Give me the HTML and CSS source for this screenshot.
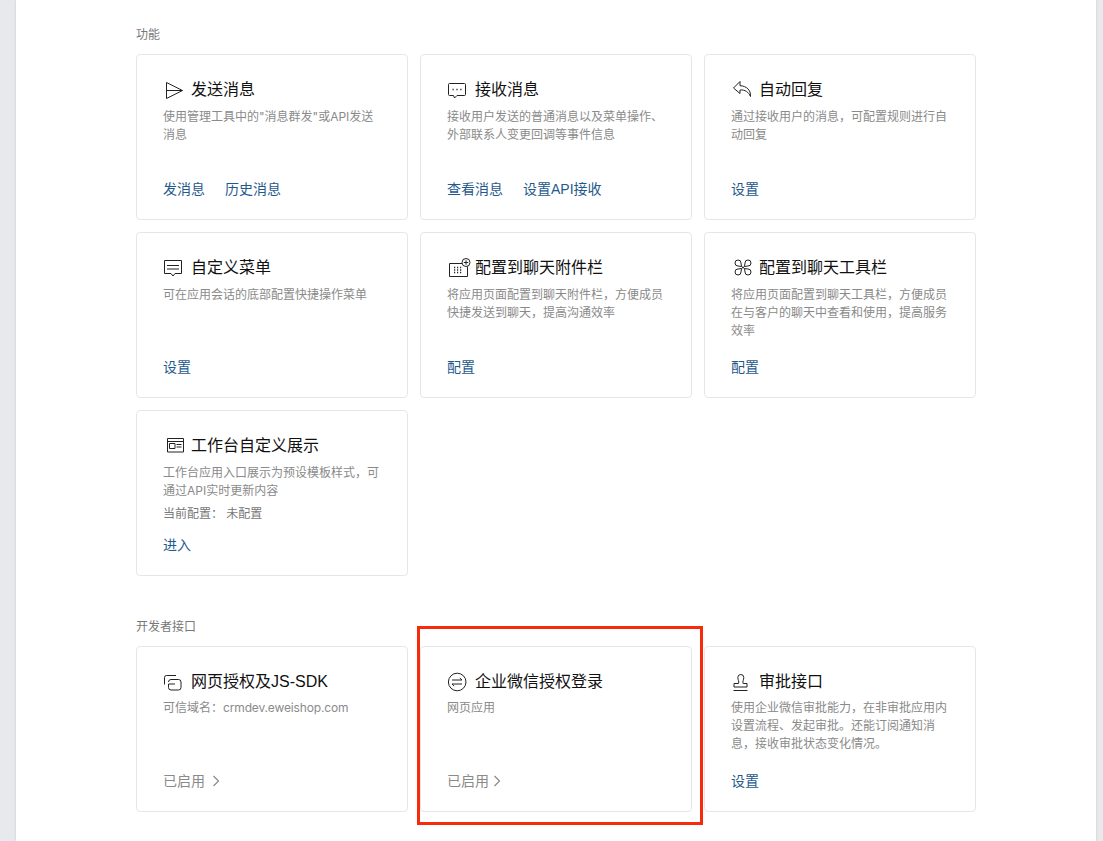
FILE: index.html
```html
<!DOCTYPE html>
<html lang="zh-CN">
<head>
<meta charset="utf-8">
<title>应用详情</title>
<link rel="stylesheet" href="styles.css">
</head>
<body>
<main class="panel">
  <section class="section">
    <h2 class="section-title">功能</h2>
    <div class="grid">
      <article class="card">
        <h3 class="card-title"><svg class="icon" viewBox="0 0 20 20"><path d="M3.500 2.500 19.500 10.500 3.500 18.500ZM3.500 10.500H19.500"/></svg>发送消息</h3>
        <p class="desc">使用管理工具中的"消息群发"或API发送消息</p>
        <div class="actions"><a class="link">发消息</a><a class="link">历史消息</a></div>
      </article>
      <article class="card">
        <h3 class="card-title"><svg class="icon" viewBox="0 0 20 20"><path d="M2.500 3.500H17.500A1 1 0 0 1 18.500 4.500V14.500A1 1 0 0 1 17.500 15.500H10L7.500 18 6.500 15.500H2.500A1 1 0 0 1 1.500 14.500V4.500A1 1 0 0 1 2.500 3.500Z"/><path class="dots" d="M5.500 9.500H6.700M9.400 9.500H10.600M13.300 9.500H14.500"/></svg>接收消息</h3>
        <p class="desc">接收用户发送的普通消息以及菜单操作、外部联系人变更回调等事件信息</p>
        <div class="actions"><a class="link">查看消息</a><a class="link">设置API接收</a></div>
      </article>
      <article class="card">
        <h3 class="card-title"><svg class="icon" viewBox="0 0 20 20"><path d="M9 1.500 2.500 8 9 13.500V10C14 9.500 17.500 12 19.500 16.500 20 10 15.500 6 9 5.700Z"/></svg>自动回复</h3>
        <p class="desc">通过接收用户的消息，可配置规则进行自动回复</p>
        <div class="actions"><a class="link">设置</a></div>
      </article>
      <article class="card">
        <h3 class="card-title"><svg class="icon" viewBox="0 0 20 20"><path d="M1.500 2.500H18.500V15.500H12L10 18 8 15.500H1.500ZM4 7.500H16M4 11H16"/></svg>自定义菜单</h3>
        <p class="desc">可在应用会话的底部配置快捷操作菜单</p>
        <div class="actions"><a class="link">设置</a></div>
      </article>
      <article class="card">
        <h3 class="card-title"><svg class="icon icon-wide" viewBox="0 0 24 20"><path d="M15 5.500H2.500V18.500H20.500V8.500"/><path class="dots" d="M7 9.500H8.200M10 9.500H11.200M13 9.500H14.200M7 12H8.200M10 12H11.200M13 12H14.200M7 14.500H8.200M10 14.500H11.200M13 14.500H14.200"/><circle cx="19" cy="4.500" r="4"/><path d="M19 2.300V6.700M16.800 4.500H21.200"/></svg>配置到聊天附件栏</h3>
        <p class="desc">将应用页面配置到聊天附件栏，方便成员快捷发送到聊天，提高沟通效率</p>
        <div class="actions"><a class="link">配置</a></div>
      </article>
      <article class="card">
        <h3 class="card-title"><svg class="icon" viewBox="0 0 20 20"><path d="M10.500 8.500 7 8A3 3 0 1 1 10 5ZM13.500 8.500 17 8A3 3 0 1 0 14 5ZM10.500 10.500 7 11A3 3 0 1 0 10 14ZM13.500 10.500 17 11A3 3 0 1 1 14 14ZM10.500 8.500 13.500 10.500M13.500 8.500 10.500 10.500"/></svg>配置到聊天工具栏</h3>
        <p class="desc">将应用页面配置到聊天工具栏，方便成员在与客户的聊天中查看和使用，提高服务效率</p>
        <div class="actions"><a class="link">配置</a></div>
      </article>
      <article class="card">
        <h3 class="card-title"><svg class="icon" viewBox="0 0 20 20"><path d="M4.500 2.500H20.500V16H4.500ZM4.500 5.500H20.500M6.500 7.500H12V12.500H6.500ZM13.500 8.500H18.500M13.500 11H18.500"/></svg>工作台自定义展示</h3>
        <p class="desc">工作台应用入口展示为预设模板样式，可通过API实时更新内容</p>
        <p class="config">当前配置： 未配置</p>
        <div class="actions"><a class="link">进入</a></div>
      </article>
    </div>
  </section>
  <section class="section">
    <h2 class="section-title">开发者接口</h2>
    <div class="grid">
      <article class="card">
        <h3 class="card-title"><svg class="icon" viewBox="0 0 20 20"><path d="M1.500 12.500V5.500A2 2 0 0 1 3.500 3.500H13M5.500 10A2.500 2.500 0 0 1 8 7.500H15.500A2.500 2.500 0 0 1 18 10V15.500A2.500 2.500 0 0 1 15.500 18H8A2.500 2.500 0 0 1 5.500 15.500V12H12"/></svg>网页授权及JS-SDK</h3>
        <p class="desc desc-tight">可信域名：<span class="domain">crmdev.eweishop.com</span></p>
        <div class="actions"><a class="status">已启用<svg class="chevron" viewBox="0 0 8 12"><path d="M1.500 1 6.500 6 1.500 11"/></svg></a></div>
      </article>
      <article class="card">
        <h3 class="card-title"><svg class="icon" viewBox="0 0 20 20"><circle cx="10.200" cy="10" r="8.800"/><path d="M5 8H15L12.800 6M15 12H5L7.200 14"/></svg>企业微信授权登录</h3>
        <p class="desc desc-tight">网页应用</p>
        <div class="actions"><a class="status status-tight">已启用<svg class="chevron" viewBox="0 0 8 12"><path d="M1.500 1 6.500 6 1.500 11"/></svg></a></div>
      </article>
      <article class="card">
        <h3 class="card-title"><svg class="icon" viewBox="0 0 20 20"><path d="M7.500 11.500C8.500 9.500 6.800 8 6.800 5.500A3 3 0 0 1 12.800 5.500C12.800 8 11.200 9.500 12.200 11.500H16V15H3V11.500ZM2.500 18.500H16.500"/></svg>审批接口</h3>
        <p class="desc desc-tight">使用企业微信审批能力，在非审批应用内设置流程、发起审批。还能订阅通知消息，接收审批状态变化情况。</p>
        <div class="actions"><a class="link">设置</a></div>
      </article>
    </div>
  </section>
  <div class="highlight"></div>
</main>
</body>
</html>
```
FILE: styles.css
```css
* { box-sizing: border-box; }
html, body { margin: 0; height: 841px; overflow: hidden; }
body {
  background: #e8e9ec;
  font-family: "Liberation Sans", "Noto Sans CJK SC", sans-serif;
  color: #000;
}
.panel {
  position: relative;
  margin-left: 16px;
  width: 1080px;
  height: 841px;
  background: #fff;
  padding: 25px 120px 0;
  box-shadow: 0 0 3px rgba(0, 0, 0, .12);
}
.section { margin-bottom: 41px; }
.section-title {
  margin: 0 0 9px;
  font-size: 12px;
  line-height: 20px;
  font-weight: 400;
  color: #787878;
}
.grid {
  display: grid;
  grid-template-columns: repeat(3, 272px);
  grid-auto-rows: 166px;
  gap: 12px;
}
.card {
  display: flex;
  flex-direction: column;
  padding: 25px 26px 20px;
  border: 1px solid #e4e6e9;
  border-radius: 4px;
  background: #fff;
}
.card-title {
  display: flex;
  align-items: center;
  margin: 0 0 8px;
  font-size: 16px;
  line-height: 20px;
  font-weight: 400;
  color: #111;
}
.icon {
  flex: none;
  width: 20px;
  height: 20px;
  margin-right: 8px;
  fill: none;
  stroke: #222;
  stroke-width: 1;
  overflow: visible;
}
.icon-wide { width: 24px; margin-right: 4px; }
.dots { stroke-width: 1.4; }
.desc {
  margin: 0;
  font-family: "Inter", "Noto Sans CJK SC", sans-serif;
  font-size: 12px;
  line-height: 18px;
  color: #8a8a8a;
}
.desc-tight { margin-top: -1px; }
.domain { letter-spacing: -.15px; }
.config {
  margin: 5px 0 0;
  font-size: 12px;
  line-height: 18px;
  color: #787878;
}
.actions {
  display: flex;
  gap: 20px;
  margin-top: auto;
  font-size: 14px;
  line-height: 20px;
}
.link { color: #1f5a8c; }
.status {
  display: flex;
  align-items: center;
  color: #8a8a8a;
}
.chevron {
  width: 8px;
  height: 12px;
  margin-left: 7px;
  fill: none;
  stroke: #8a8a8a;
  stroke-width: 1.2;
}
.status-tight .chevron { margin-left: 4px; }
.highlight {
  position: absolute;
  left: 401px;
  top: 626px;
  width: 286px;
  height: 199px;
  border: 3px solid #f82a0c;
  pointer-events: none;
}
```
